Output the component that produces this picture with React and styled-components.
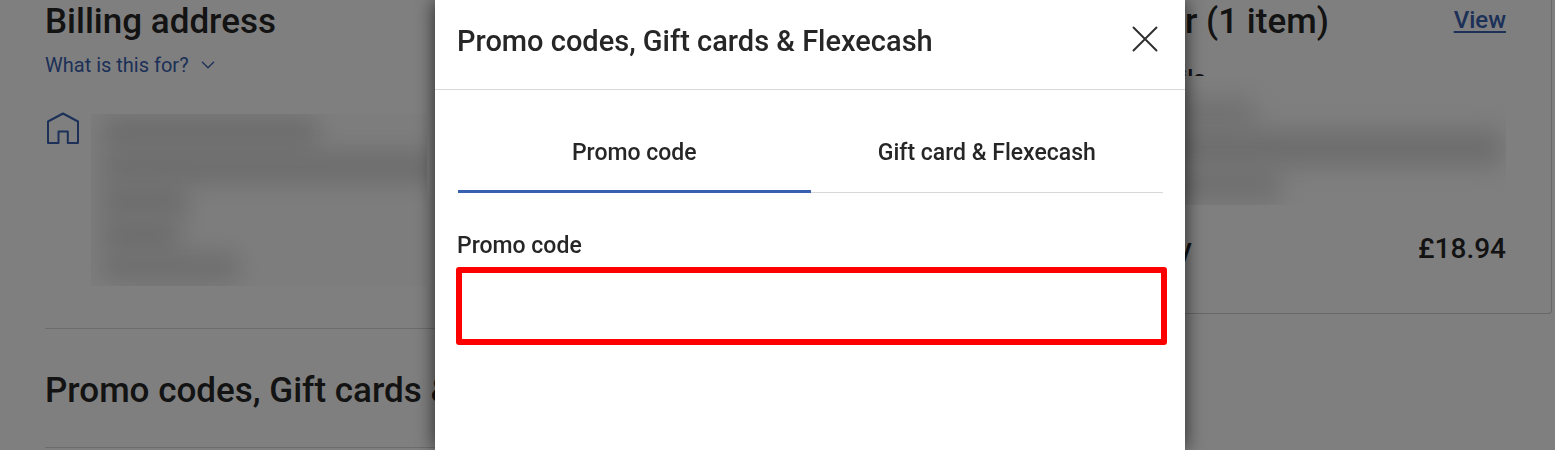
import React from "react";
import styled, { createGlobalStyle } from "styled-components";

const GlobalStyle = createGlobalStyle`
  * { box-sizing: border-box; }
  html, body, #root { height: 100%; }
  body {
    margin: 0;
    overflow: hidden;
    background: #fff;
    color: #262626;
    font-family: Roboto, "Liberation Sans", sans-serif;
  }
  h2, p { margin: 0; }
  button, input { font: inherit; color: inherit; }
`;

const Page = styled.div`
  display: flex;
  align-items: flex-start;
  justify-content: space-between;
  gap: 40px;
  padding: 0 3px 0 45px;
`;

const Checkout = styled.main`
  flex: 1;
  min-width: 0;
`;

const Section = styled.section`
  border-bottom: 1px solid #d8d8d8;
`;

const BillingSection = styled(Section)`
  padding-bottom: 42px;
`;

const PromoSection = styled(Section)`
  padding: 40px 0 34px;
`;

const Heading = styled.h2`
  font-size: 35px;
  line-height: 44px;
  font-weight: 500;
  white-space: nowrap;
`;

const HelpButton = styled.button`
  display: flex;
  align-items: center;
  gap: 12px;
  margin-top: 9px;
  padding: 0;
  border: 0;
  background: none;
  color: #3860b0;
  font-size: 20px;
  line-height: 24px;
`;

const Address = styled.div`
  display: flex;
  align-items: flex-start;
  gap: 11px;
  margin-top: 35px;
`;

const Redacted = styled.div`
  display: flex;
  flex-direction: column;
  isolation: isolate;
  overflow: hidden;
  background: ${(p) => p.$tint || "#fbfbfb"};
  width: ${(p) => p.$width};
  height: ${(p) => p.$height};
  margin-top: ${(p) => p.$top || "0"};
  padding-top: ${(p) => p.$inset};
`;

const Smudge = styled.div`
  flex: none;
  width: ${(p) => p.$width};
  height: ${(p) => p.$height || "35px"};
  margin-left: ${(p) => p.$indent || "12px"};
  background: ${(p) => p.$color || "#dadada"};
  filter: blur(12px);
`;

const Summary = styled.aside`
  width: 543px;
  height: 314px;
  padding: 0 45px 0 24px;
  border: 1px solid #d0d0d0;
  border-top: 0;
  border-radius: 0 0 4px 4px;
`;

const SummaryRow = styled.div`
  display: flex;
  justify-content: space-between;
  align-items: flex-start;
`;

const ViewLink = styled.a`
  color: #3860b0;
  font-size: 24px;
  line-height: 40px;
  font-weight: 500;
  text-decoration: underline;
  text-decoration-thickness: 2px;
  text-underline-offset: 3px;
`;

const Delivery = styled.p`
  margin-top: 23px;
  padding-left: 8px;
  font-size: 24px;
  line-height: 24px;
  font-weight: 500;
`;

const Total = styled(SummaryRow)`
  margin-top: 26px;
  padding-left: 12px;
  font-size: 28px;
  line-height: 36px;
  font-weight: 500;
`;

const Overlay = styled.div`
  position: fixed;
  inset: 0;
  display: flex;
  justify-content: center;
  padding-left: 65px;
  background: rgba(0, 0, 0, 0.5);
`;

const Dialog = styled.div`
  width: 750px;
  max-width: 100%;
  background: #fff;
  box-shadow: 0 0 18px rgba(0, 0, 0, 0.7);
`;

const DialogHeader = styled.header`
  display: flex;
  align-items: center;
  justify-content: space-between;
  height: 90px;
  padding: 0 22px 8px;
  border-bottom: 1px solid #d8d8d8;
`;

const DialogTitle = styled.h2`
  font-size: 29px;
  line-height: 36px;
  font-weight: 500;
`;

const CloseButton = styled.button`
  display: flex;
  padding: 4px 4px 8px;
  border: 0;
  background: none;
`;

const Tabs = styled.div`
  display: flex;
  margin: 22px 22px 0 23px;
`;

const Tab = styled.button`
  flex: 1;
  height: 81px;
  padding: 0;
  border: 0;
  background: none;
  box-shadow: inset 0 ${(p) => (p.$active ? "-3px #3860b0" : "-1px #d8d8d8")};
  font-size: 23px;
  line-height: 28px;
  font-weight: 500;
`;

const Field = styled.div`
  margin: 38px 18px 0 21px;
`;

const Label = styled.label`
  display: block;
  padding: 0 1px;
  font-size: 23px;
  line-height: 30px;
  font-weight: 500;
`;

const Input = styled.input`
  display: block;
  width: 100%;
  height: 78px;
  margin-top: 6px;
  padding: 0 16px;
  border: 6px solid #f00;
  border-radius: 3px;
  outline: 0;
  background: #fff;
  font-size: 23px;
`;

function HomeIcon() {
  return (
    <svg width="35" height="34" viewBox="0 0 35 34" fill="none" stroke="#3860b0" strokeWidth="2" strokeLinejoin="round">
      <path d="M3 9.500 18 1.500l15 8V31H22.800V19.500h-9.300V31H3Z" />
    </svg>
  );
}

function ChevronIcon() {
  return (
    <svg width="14" height="8" viewBox="0 0 14 8" fill="none" stroke="#3860b0" strokeWidth="1.300">
      <path d="M1 .8l6 6 6-6" />
    </svg>
  );
}

function CloseIcon() {
  return (
    <svg width="28" height="28" viewBox="0 0 28 28" fill="none" stroke="#2e2e2e" strokeWidth="1.900" strokeLinecap="round">
      <path d="M2.500 2.500l23 23M25.500 2.500l-23 23" />
    </svg>
  );
}

export default function App() {
  return (
    <>
      <GlobalStyle />
      <Page>
        <Checkout>
          <BillingSection>
            <Heading>Billing address</Heading>
            <HelpButton type="button">
              What is this for?
              <ChevronIcon />
            </HelpButton>
            <Address>
              <HomeIcon />
              <Redacted $width="336px" $height="172px" $top="2px" $inset="2px">
                <Smudge $width="214px" />
                <Smudge $width="340px" $height="32px" />
                <Smudge $width="84px" />
                <Smudge $width="76px" />
                <Smudge $width="136px" $height="28px" />
              </Redacted>
            </Address>
          </BillingSection>
          <PromoSection>
            <Heading>Promo codes, Gift cards &amp; Flexecash</Heading>
          </PromoSection>
        </Checkout>
        <Summary>
          <SummaryRow>
            <Heading>Your order (1 item)</Heading>
            <ViewLink href="#order">View</ViewLink>
          </SummaryRow>
          <Delivery>Delivery details</Delivery>
          <Redacted $width="100%" $height="129px" $top="-15px" $inset="22px" $tint="#fefefe">
            <Smudge $width="220px" $height="32px" $indent="0" $color="#e2e2e2" />
            <Smudge $width="468px" $height="36px" $indent="0" />
            <Smudge $width="246px" $height="36px" $indent="0" $color="#dedede" />
          </Redacted>
          <Total>
            <span>Total to pay</span>
            <span>£18.94</span>
          </Total>
        </Summary>
      </Page>
      <Overlay>
        <Dialog role="dialog" aria-modal="true" aria-labelledby="dialog-title">
          <DialogHeader>
            <DialogTitle id="dialog-title">Promo codes, Gift cards &amp; Flexecash</DialogTitle>
            <CloseButton type="button" aria-label="Close">
              <CloseIcon />
            </CloseButton>
          </DialogHeader>
          <Tabs role="tablist">
            <Tab type="button" role="tab" aria-selected="true" $active>
              Promo code
            </Tab>
            <Tab type="button" role="tab" aria-selected="false">
              Gift card &amp; Flexecash
            </Tab>
          </Tabs>
          <Field>
            <Label htmlFor="promo-code">Promo code</Label>
            <Input id="promo-code" type="text" />
          </Field>
        </Dialog>
      </Overlay>
    </>
  );
}
